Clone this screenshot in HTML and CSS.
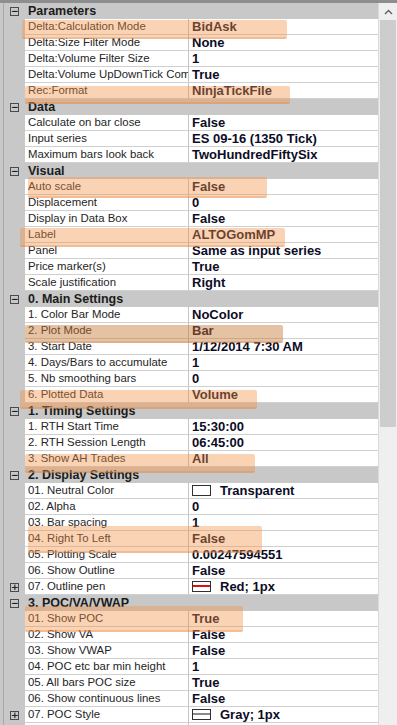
FILE: index.html
```html
<!DOCTYPE html>
<html lang="en">
<head>
    <meta charset="UTF-8">
    <meta name="viewport" content="width=device-width, initial-scale=1.0">
    <title>Indicator properties</title>
    <link rel="stylesheet" href="styles.css">
</head>

<body>

    <div class="window">
        <div class="grid">

            <!-- Parameters -->
            <div class="cat"><span class="gutter"><span class="box">&minus;</span></span><span class="cat-title">Parameters</span></div>
            <div class="row"><span class="gutter"></span><span class="name">Delta:Calculation Mode</span><span class="value">BidAsk</span></div>
            <div class="row"><span class="gutter"></span><span class="name">Delta:Size Filter Mode</span><span class="value">None</span></div>
            <div class="row"><span class="gutter"></span><span class="name">Delta:Volume Filter Size</span><span class="value">1</span></div>
            <div class="row"><span class="gutter"></span><span class="name">Delta:Volume UpDownTick Com</span><span class="value">True</span></div>
            <div class="row"><span class="gutter"></span><span class="name">Rec:Format</span><span class="value">NinjaTickFile</span></div>

            <!-- Data -->
            <div class="cat"><span class="gutter"><span class="box">&minus;</span></span><span class="cat-title">Data</span></div>
            <div class="row"><span class="gutter"></span><span class="name">Calculate on bar close</span><span class="value">False</span></div>
            <div class="row"><span class="gutter"></span><span class="name">Input series</span><span class="value">ES 09-16 (1350 Tick)</span></div>
            <div class="row"><span class="gutter"></span><span class="name">Maximum bars look back</span><span class="value">TwoHundredFiftySix</span></div>

            <!-- Visual -->
            <div class="cat"><span class="gutter"><span class="box">&minus;</span></span><span class="cat-title">Visual</span></div>
            <div class="row"><span class="gutter"></span><span class="name">Auto scale</span><span class="value">False</span></div>
            <div class="row"><span class="gutter"></span><span class="name">Displacement</span><span class="value">0</span></div>
            <div class="row"><span class="gutter"></span><span class="name">Display in Data Box</span><span class="value">False</span></div>
            <div class="row"><span class="gutter"></span><span class="name">Label</span><span class="value">ALTOGomMP</span></div>
            <div class="row"><span class="gutter"></span><span class="name">Panel</span><span class="value">Same as input series</span></div>
            <div class="row"><span class="gutter"></span><span class="name">Price marker(s)</span><span class="value">True</span></div>
            <div class="row"><span class="gutter"></span><span class="name">Scale justification</span><span class="value">Right</span></div>

            <!-- 0. Main Settings -->
            <div class="cat"><span class="gutter"><span class="box">&minus;</span></span><span class="cat-title">0. Main Settings</span></div>
            <div class="row"><span class="gutter"></span><span class="name">1. Color Bar Mode</span><span class="value">NoColor</span></div>
            <div class="row"><span class="gutter"></span><span class="name">2. Plot Mode</span><span class="value">Bar</span></div>
            <div class="row"><span class="gutter"></span><span class="name">3. Start Date</span><span class="value">1/12/2014 7:30 AM</span></div>
            <div class="row"><span class="gutter"></span><span class="name">4. Days/Bars to accumulate</span><span class="value">1</span></div>
            <div class="row"><span class="gutter"></span><span class="name">5. Nb smoothing bars</span><span class="value">0</span></div>
            <div class="row"><span class="gutter"></span><span class="name">6. Plotted Data</span><span class="value">Volume</span></div>

            <!-- 1. Timing Settings -->
            <div class="cat"><span class="gutter"><span class="box">&minus;</span></span><span class="cat-title">1. Timing Settings</span></div>
            <div class="row"><span class="gutter"></span><span class="name">1. RTH Start Time</span><span class="value">15:30:00</span></div>
            <div class="row"><span class="gutter"></span><span class="name">2. RTH Session Length</span><span class="value">06:45:00</span></div>
            <div class="row"><span class="gutter"></span><span class="name">3. Show AH Trades</span><span class="value">All</span></div>

            <!-- 2. Display Settings -->
            <div class="cat"><span class="gutter"><span class="box">&minus;</span></span><span class="cat-title">2. Display Settings</span></div>
            <div class="row"><span class="gutter"></span><span class="name">01. Neutral Color</span><span class="value"><span class="swatch"></span>Transparent</span></div>
            <div class="row"><span class="gutter"></span><span class="name">02. Alpha</span><span class="value">0</span></div>
            <div class="row"><span class="gutter"></span><span class="name">03. Bar spacing</span><span class="value">1</span></div>
            <div class="row"><span class="gutter"></span><span class="name">04. Right To Left</span><span class="value">False</span></div>
            <div class="row"><span class="gutter"></span><span class="name">05. Plotting Scale</span><span class="value">0.00247594551</span></div>
            <div class="row"><span class="gutter"></span><span class="name">06. Show Outline</span><span class="value">False</span></div>
            <div class="row"><span class="gutter"><span class="box">+</span></span><span class="name">07. Outline pen</span><span class="value"><span class="swatch pen-red"></span>Red; 1px</span></div>

            <!-- 3. POC/VA/VWAP -->
            <div class="cat"><span class="gutter"><span class="box">&minus;</span></span><span class="cat-title">3. POC/VA/VWAP</span></div>
            <div class="row"><span class="gutter"></span><span class="name">01. Show POC</span><span class="value">True</span></div>
            <div class="row"><span class="gutter"></span><span class="name">02. Show VA</span><span class="value">False</span></div>
            <div class="row"><span class="gutter"></span><span class="name">03. Show VWAP</span><span class="value">False</span></div>
            <div class="row"><span class="gutter"></span><span class="name">04. POC etc bar min height</span><span class="value">1</span></div>
            <div class="row"><span class="gutter"></span><span class="name">05. All bars POC size</span><span class="value">True</span></div>
            <div class="row"><span class="gutter"></span><span class="name">06. Show continuous lines</span><span class="value">False</span></div>
            <div class="row"><span class="gutter"><span class="box">+</span></span><span class="name">07. POC Style</span><span class="value"><span class="swatch pen-gray"></span>Gray; 1px</span></div>
            <div class="row"><span class="gutter"></span><span class="name"></span><span class="value"></span></div>
        </div>

        <div class="scrollbar">
            <div class="arrow">
                <svg width="9" height="6" viewBox="0 0 9 6"><path d="M1 5 L4.5 1.5 L8 5" fill="none" stroke="#606060" stroke-width="1.4"/></svg>
            </div>
            <div class="thumb"></div>
        </div>

        <!-- surligneur -->
        <div class="mark" style="left:22px; top:17px; width:265px; height:19px"></div>
        <div class="mark" style="left:25px; top:83px; width:265px; height:18px"></div>
        <div class="mark" style="left:28px; top:174px; width:239px; height:21px"></div>
        <div class="mark" style="left:20px; top:225px; width:265px; height:19px"></div>
        <div class="mark dark" style="left:25px; top:322px; width:258px; height:18px"></div>
        <div class="mark" style="left:20px; top:387px; width:237px; height:19px"></div>
        <div class="mark" style="left:25px; top:451px; width:230px; height:19px"></div>
        <div class="mark" style="left:28px; top:523px; width:234px; height:27px"></div>
        <div class="mark" style="left:25px; top:603px; width:218px; height:26px"></div>
    </div>

</body>

</html>
```

FILE: styles.css
```css
body {
    margin: 0;
    background-color: #c8c8c8;
    font-family: "Liberation Sans", Arial, sans-serif;
}

.window {
    position: relative;
    display: flex;
    width: 397px;
    height: 725px;
    overflow: hidden;
    border-top: 3px solid #8e8e8e;
    box-sizing: border-box;
}

.grid {
    flex: 1;
    margin-left: 3px;
    border-left: 1px solid #a8a8a8;
    background-color: #c8c8c8;
}

.row,
.cat {
    display: flex;
    height: 16px;
}

.gutter {
    width: 21px;
    flex: none;
    display: flex;
    align-items: center;
    justify-content: center;
    background-color: #c8c8c8;
}

.box {
    width: 7px;
    height: 7px;
    border: 1px solid #4a4a4a;
    font-size: 9px;
    line-height: 7px;
    text-align: center;
    color: #202020;
    font-family: "DejaVu Sans", sans-serif;
    font-weight: bold;
}

.cat-title {
    padding-left: 3px;
    font-size: 12.5px;
    font-weight: bold;
    line-height: 16px;
    color: #1b1b1b;
}

.name {
    width: 160px;
    flex: none;
    padding-left: 3px;
    background-color: #fff;
    border-bottom: 1px solid #d0d0d0;
    border-right: 1px solid #c4c4c4;
    font-size: 11.4px;
    line-height: 15px;
    color: #252525;
    white-space: nowrap;
    overflow: hidden;
}

.value {
    flex: 1;
    display: flex;
    align-items: center;
    padding-left: 3px;
    background-color: #fff;
    border-bottom: 1px solid #d0d0d0;
    font-size: 13px;
    font-weight: bold;
    line-height: 15px;
    color: #0c0c26;
    white-space: nowrap;
    overflow: hidden;
}

.swatch {
    position: relative;
    width: 17px;
    height: 9px;
    margin-right: 9px;
    border: 1px solid #303030;
    background-color: #fff;
    flex: none;
}

.pen-red::after,
.pen-gray::after {
    content: "";
    position: absolute;
    left: 0;
    right: 0;
    top: 3px;
    height: 2px;
}

.pen-red::after {
    background-color: #e01010;
}

.pen-gray::after {
    background-color: #8a8a8a;
}

.scrollbar {
    width: 19px;
    flex: none;
    background-color: #efefef;
    border-left: 1px solid #dadada;
    box-sizing: border-box;
}

.arrow {
    height: 17px;
    display: flex;
    align-items: center;
    justify-content: center;
}

.thumb {
    height: 407px;
    margin: 0 1px;
    background-color: #cdcdcd;
}

.mark {
    position: absolute;
    background-color: rgba(242, 146, 70, 0.4);
    border-bottom: 2px solid rgba(220, 120, 50, 0.25);
    border-radius: 2px;
    box-sizing: border-box;
}

.mark.dark {
    background-color: rgba(200, 120, 55, 0.45);
}
```
